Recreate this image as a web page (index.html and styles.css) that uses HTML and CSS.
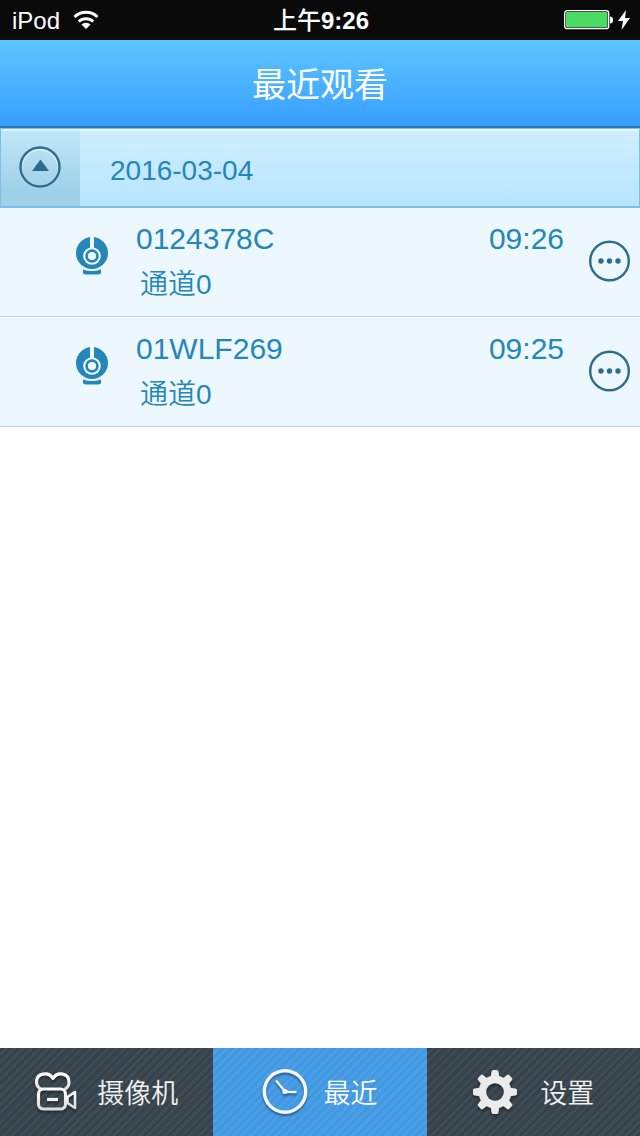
FILE: index.html
```html
<!DOCTYPE html>
<html lang="zh-CN">
<head>
  <meta charset="utf-8">
  <meta name="viewport" content="width=device-width">
  <title>最近观看</title>
  <link rel="stylesheet" href="styles.css">
</head>
<body>
  <!-- shared icons -->
  <svg class="defs" width="0" height="0" aria-hidden="true">
    <symbol id="webcam" viewBox="0 0 34 40">
      <circle cx="17" cy="16" r="16" fill="#2486b9"/>
      <path d="M15 0h4v12h-4z" fill="#edf8fe"/>
      <circle cx="17" cy="19" r="8.800" fill="#edf8fe"/>
      <circle cx="17" cy="19" r="5.400" fill="none" stroke="#2486b9" stroke-width="2.600"/>
      <path d="M8 32.500q9 3 18 0v3q0 2-4 2H12q-4 0-4-2z" fill="#2486b9"/>
    </symbol>
    <symbol id="more" viewBox="0 0 42 42">
      <circle cx="21.500" cy="21" r="19.300" fill="none" stroke="#2b6c8f" stroke-width="2.400"/>
      <circle cx="13" cy="21" r="2.700" fill="#2b6c8f"/>
      <circle cx="21.500" cy="21" r="2.700" fill="#2b6c8f"/>
      <circle cx="30" cy="21" r="2.700" fill="#2b6c8f"/>
    </symbol>
    <linearGradient id="silver" x1="0" y1="0" x2="0" y2="1">
      <stop offset="0" stop-color="#fff"/>
      <stop offset="1" stop-color="#dcdcdc"/>
    </linearGradient>
  </svg>

  <div class="status">
    <div class="carrier">
      <span>iPod</span>
      <svg width="26" height="20" viewBox="0 0 26 20">
        <g fill="none" stroke="#fff" stroke-width="3">
          <path d="M1.500 7a16.500 16.500 0 0 1 23 0"/>
          <path d="M5.800 11.500a10.500 10.500 0 0 1 14.400 0"/>
        </g>
        <path d="M8.500 14.500a6.500 6.500 0 0 1 9 0L13 19z" fill="#fff"/>
      </svg>
    </div>
    <div class="time">上午<b>9:26</b></div>
    <div class="power">
      <svg width="50" height="20" viewBox="0 0 50 20">
        <rect x="0.700" y="0.700" width="44" height="18" rx="2.500" fill="none" stroke="#fff" stroke-width="1.300"/>
        <rect x="2" y="2" width="41.500" height="15.500" rx="1" fill="#4cd964"/>
        <path d="M46 6.500q3 0 3 3.500t-3 3.500z" fill="#fff"/>
      </svg>
      <svg width="12" height="20" viewBox="0 0 12 20">
        <path d="M8 0L0 11h5L3.500 20 12 8H7z" fill="#fff"/>
      </svg>
    </div>
  </div>

  <header class="navbar">
    <h1>最近观看</h1>
  </header>

  <main class="content">
    <div class="group">
      <button class="toggle" aria-label="收起">
        <svg width="42" height="42" viewBox="0 0 42 42">
          <circle cx="21" cy="22" r="19" fill="none" stroke="#d5eefa" stroke-width="3"/>
          <circle cx="21" cy="21" r="19.500" fill="none" stroke="#2b6c8f" stroke-width="2.400"/>
          <path d="M21.500 13.500l8.500 11.500H13z" fill="#2b6c8f"/>
        </svg>
      </button>
      <h2>2016-03-04</h2>
    </div>

    <ul class="records">
      <li class="record">
        <svg class="webcam" width="34" height="40"><use href="#webcam"/></svg>
        <div class="info">
          <div class="name">0124378C</div>
          <div class="channel">通道0</div>
        </div>
        <div class="seen">09:26</div>
        <button class="more" aria-label="更多">
          <svg width="42" height="42"><use href="#more"/></svg>
        </button>
      </li>
      <li class="record">
        <svg class="webcam" width="34" height="40"><use href="#webcam"/></svg>
        <div class="info">
          <div class="name">01WLF269</div>
          <div class="channel">通道0</div>
        </div>
        <div class="seen">09:25</div>
        <button class="more" aria-label="更多">
          <svg width="42" height="42"><use href="#more"/></svg>
        </button>
      </li>
    </ul>
  </main>

  <nav class="tabs">
    <a class="tab camera" href="#camera">
      <svg width="42" height="40" viewBox="0 0 42 40" fill="none" stroke="url(#silver)" stroke-width="3.200" stroke-linejoin="round">
        <path d="M7 17.500C3 16 1.500 13 1.500 10c0-9 12-11 16.500-3.500C22.500-1 34 1 34 10c0 3-1.500 6-4.500 7.500"/>
        <rect x="3.500" y="17" width="27" height="20" rx="5"/>
        <path d="M12 27.500h11" stroke="#f0f0f0"/>
        <path d="M32.500 25l7.500-5v16l-7.500-5z" stroke-width="2.600"/>
      </svg>
      <span>摄像机</span>
    </a>
    <a class="tab recent active" href="#recent">
      <svg width="46" height="46" viewBox="0 0 46 46" fill="none" stroke="#f6f6f6">
        <circle cx="23" cy="22.500" r="20.700" stroke-width="3.500"/>
        <path d="M14 11.500l9 11" stroke-width="2.200"/>
        <path d="M23 23h11.500" stroke-width="2.200"/>
        <circle cx="23" cy="22.500" r="2.600" fill="#f6f6f6" stroke="none"/>
      </svg>
      <span>最近</span>
    </a>
    <a class="tab settings" href="#settings">
      <svg width="46" height="46" viewBox="0 0 46 46">
        <defs>
          <mask id="hub">
            <rect width="46" height="46" fill="#fff"/>
            <circle cx="23" cy="23" r="8.800" fill="#000"/>
          </mask>
          <path id="tooth" d="M18.500 10l1-7.500q.2-1.500 1.800-1.500h3.400q1.600 0 1.800 1.500l1 7.500z"/>
        </defs>
        <g fill="#ebebeb" mask="url(#hub)">
          <circle cx="23" cy="23" r="16.500"/>
          <use href="#tooth"/>
          <use href="#tooth" transform="rotate(45 23 23)"/>
          <use href="#tooth" transform="rotate(90 23 23)"/>
          <use href="#tooth" transform="rotate(135 23 23)"/>
          <use href="#tooth" transform="rotate(180 23 23)"/>
          <use href="#tooth" transform="rotate(225 23 23)"/>
          <use href="#tooth" transform="rotate(270 23 23)"/>
          <use href="#tooth" transform="rotate(315 23 23)"/>
        </g>
      </svg>
      <span>设置</span>
    </a>
  </nav>
</body>
</html>
```
FILE: styles.css
```css
* {
  box-sizing: border-box;
}

body {
  margin: 0;
  min-height: 100vh;
  display: flex;
  flex-direction: column;
  background-color: #fff;
  color: #2486b9;
  font-family: "Liberation Sans", "Noto Sans CJK SC", sans-serif;
}

svg {
  display: block;
  flex-shrink: 0;
}

.defs {
  position: absolute;
}

h1, h2, ul {
  margin: 0;
  padding: 0;
  font-weight: normal;
}

button {
  padding: 0;
  border: none;
  background: none;
  cursor: pointer;
}

/* status bar */
.status {
  display: grid;
  grid-template-columns: 1fr auto 1fr;
  align-items: center;
  height: 40px;
  padding: 0 10px 0 12px;
  background-color: #0a0a0a;
  color: #fff;
  font-size: 24px;
}

.carrier {
  display: flex;
  align-items: center;
  gap: 13px;
  line-height: 30px;
}

.carrier span {
  padding-top: 1px;
}

.time {
  padding-top: 2px;
  font-weight: 500;
  line-height: 36px;
}

.power {
  display: flex;
  align-items: center;
  justify-content: flex-end;
  gap: 4px;
}

/* title bar */
.navbar {
  height: 88px;
  border-bottom: 2px solid #2f78b5;
  background: linear-gradient(#5ec6ff, #379eff);
  color: #fff;
  text-align: center;
}

.navbar h1 {
  font-size: 34px;
  line-height: 90px;
}

.content {
  flex: 1;
}

/* date group */
.group {
  display: flex;
  height: 80px;
  border: 1px solid #7dbfe6;
  border-bottom-width: 2px;
  background: linear-gradient(#cfeeff, #b8e5ff);
  box-shadow: inset 0 2px #eaf8ff;
}

.toggle {
  display: flex;
  justify-content: center;
  width: 79px;
  padding: 17px 2px 0 0;
  background: linear-gradient(#c4e7f9, #9dd1e8 80%);
  box-shadow: inset 0 2px #e2f3fb;
}

.group h2 {
  padding-left: 30px;
  font-size: 28px;
  line-height: 84px;
}

/* record list */
.records {
  list-style: none;
}

.record {
  display: flex;
  padding: 12px 10px 10px 75px;
  border-bottom: 1px solid #b4d8ea;
  background-color: #edf8fe;
}

.record + .record {
  border-top: 1px solid #f8fdff;
}

.record .webcam {
  margin-top: 17px;
}

.info {
  flex: 1;
  padding-left: 27px;
}

.name, .seen {
  font-size: 30px;
  line-height: 38px;
}

.channel {
  padding: 6px 0 0 4px;
  font-size: 28px;
  font-weight: 350;
  line-height: 42px;
}

.more {
  align-self: flex-start;
  margin: 20px 0 0 24px;
}

/* bottom tabs */
.tabs {
  display: grid;
  grid-template-columns: 1fr 1fr 1fr;
  height: 88px;
}

.tab {
  display: flex;
  align-items: center;
  justify-content: center;
  background: repeating-linear-gradient(135deg, #35424b 0 3px, #3e4b53 3px 6px);
  color: #f2f2f2;
  font-size: 27px;
  font-weight: 350;
  text-decoration: none;
}

.tab span {
  padding-bottom: 2px;
}

.tab svg {
  filter: drop-shadow(0 2px 1px rgba(0, 0, 0, 0.4));
}

.camera {
  gap: 20px;
}

.recent {
  gap: 15px;
}

.settings {
  gap: 22px;
}

.tab.active {
  background: repeating-linear-gradient(135deg, #4197e0 0 3px, #4b9fe6 3px 6px);
  color: #fff;
}
```
